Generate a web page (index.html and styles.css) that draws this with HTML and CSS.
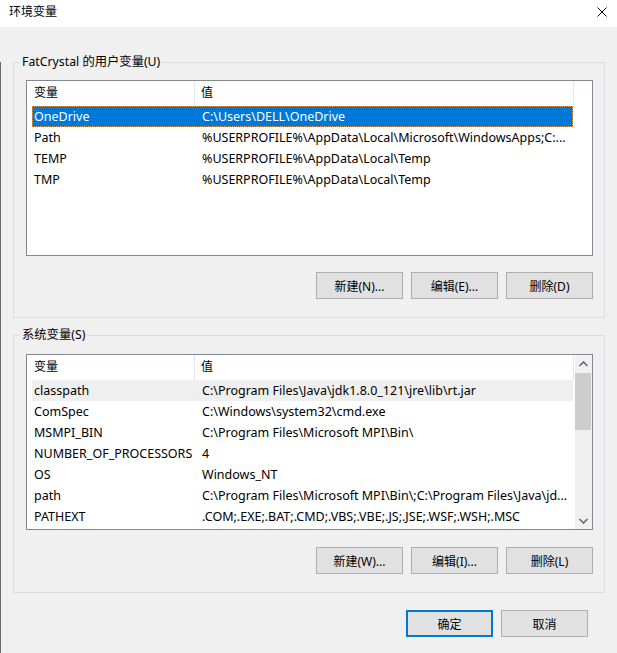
FILE: index.html
```html
<!DOCTYPE html>
<html lang="zh-CN">
<head>
<meta charset="UTF-8">
<title>环境变量</title>
<link rel="stylesheet" href="styles.css">
</head>
<body>
<div class="window">
  <div class="titlebar">
    <span class="title">环境变量</span>
    <svg class="close" width="10" height="10" viewBox="0 0 10 10">
      <path d="M0.5 0.5 L9.5 9.5 M9.5 0.5 L0.5 9.5" stroke="#000" stroke-width="1" fill="none"/>
    </svg>
  </div>

  <div class="client">
    <!-- 用户变量 -->
    <div class="group group-user">
      <span class="group-label">FatCrystal 的用户变量(U)</span>
      <div class="list">
        <div class="list-head">
          <div class="head-name">变量</div>
          <div class="head-value">值</div>
        </div>
        <div class="row selected"><span class="cell-name">OneDrive</span><span class="cell-value">C:\Users\DELL\OneDrive</span></div>
        <div class="row"><span class="cell-name">Path</span><span class="cell-value">%USERPROFILE%\AppData\Local\Microsoft\WindowsApps;C:...</span></div>
        <div class="row"><span class="cell-name">TEMP</span><span class="cell-value">%USERPROFILE%\AppData\Local\Temp</span></div>
        <div class="row"><span class="cell-name">TMP</span><span class="cell-value">%USERPROFILE%\AppData\Local\Temp</span></div>
      </div>
      <div class="buttons">
        <button class="btn">新建(N)...</button>
        <button class="btn">编辑(E)...</button>
        <button class="btn">删除(D)</button>
      </div>
    </div>

    <!-- 系统变量 -->
    <div class="group group-system">
      <span class="group-label">系统变量(S)</span>
      <div class="list list-scroll">
        <div class="list-body">
          <div class="list-head">
            <div class="head-name">变量</div>
            <div class="head-value">值</div>
          </div>
          <div class="row hover"><span class="cell-name">classpath</span><span class="cell-value">C:\Program Files\Java\jdk1.8.0_121\jre\lib\rt.jar</span></div>
          <div class="row"><span class="cell-name">ComSpec</span><span class="cell-value">C:\Windows\system32\cmd.exe</span></div>
          <div class="row"><span class="cell-name">MSMPI_BIN</span><span class="cell-value">C:\Program Files\Microsoft MPI\Bin\</span></div>
          <div class="row"><span class="cell-name">NUMBER_OF_PROCESSORS</span><span class="cell-value">4</span></div>
          <div class="row"><span class="cell-name">OS</span><span class="cell-value">Windows_NT</span></div>
          <div class="row"><span class="cell-name">path</span><span class="cell-value">C:\Program Files\Microsoft MPI\Bin\;C:\Program Files\Java\jd...</span></div>
          <div class="row"><span class="cell-name">PATHEXT</span><span class="cell-value">.COM;.EXE;.BAT;.CMD;.VBS;.VBE;.JS;.JSE;.WSF;.WSH;.MSC</span></div>
        </div>
        <div class="scrollbar">
          <div class="arrow">
            <svg width="9" height="6" viewBox="0 0 9 6"><path d="M0.5 5 L4.5 1 L8.5 5" stroke="#606060" stroke-width="1.5" fill="none"/></svg>
          </div>
          <div class="track"><div class="thumb"></div></div>
          <div class="arrow">
            <svg width="9" height="6" viewBox="0 0 9 6"><path d="M0.5 1 L4.5 5 L8.5 1" stroke="#606060" stroke-width="1.5" fill="none"/></svg>
          </div>
        </div>
      </div>
      <div class="buttons">
        <button class="btn">新建(W)...</button>
        <button class="btn">编辑(I)...</button>
        <button class="btn">删除(L)</button>
      </div>
    </div>

    <div class="footer">
      <button class="btn btn-default">确定</button>
      <button class="btn">取消</button>
    </div>

    <svg class="grip" width="10" height="10" viewBox="0 0 10 10">
      <rect x="8" y="2" width="2" height="2" fill="#bcbcbc"/>
      <rect x="5" y="5" width="2" height="2" fill="#bcbcbc"/>
      <rect x="8" y="5" width="2" height="2" fill="#bcbcbc"/>
      <rect x="2" y="8" width="2" height="2" fill="#bcbcbc"/>
      <rect x="5" y="8" width="2" height="2" fill="#bcbcbc"/>
      <rect x="8" y="8" width="2" height="2" fill="#bcbcbc"/>
    </svg>
  </div>
</div>
</body>
</html>
```

FILE: styles.css
```css
body {
  margin: 0;
  background-color: #f0f0f0;
  font-family: "Noto Sans", "Noto Sans CJK SC", sans-serif;
  font-size: 12px;
  color: #000;
}

.window {
  width: 617px;
  height: 653px;
  overflow: hidden;
}

.titlebar {
  height: 27px;
  background-color: #fff;
  display: flex;
  align-items: center;
  justify-content: space-between;
  padding: 0 10px 0 9px;
}

.title {
  font-size: 12px;
  line-height: 16px;
  margin-top: -4px;
}

.close {
  margin-top: -4px;
}

.client {
  position: relative; /* para la esquina de redimensionar */
  height: 626px;
  border-left: 1px solid #6a6a6a;
  padding: 0 12px;
}

.group {
  position: relative;
  border: 1px solid #dcdcdc;
  padding: 17px 11px 18px 12px;
}

.group-user {
  margin-top: 35px;
}

.group-system {
  margin-top: 17px;
  padding-top: 18px;
}

.group-label {
  position: absolute;
  top: -9px;
  left: 6px;
  padding: 0 2px;
  background-color: #f0f0f0;
  line-height: 16px;
  font-size: 12.3px;
}

.list {
  height: 174px;
  border: 1px solid #828790;
  background-color: #fff;
}

.list-scroll {
  display: flex;
}

.list-body {
  flex: 1;
}

.list-head {
  display: flex;
  height: 25px;
  line-height: 24px;
  width: 547px;
}

.head-name {
  width: 160px;
  padding-left: 7px;
  border-right: 1px solid #e5e5e5;
}

.head-value {
  flex: 1;
  padding-left: 6px;
  border-right: 1px solid #e5e5e5;
}

.row {
  display: flex;
  height: 21px;
  line-height: 21px;
  margin-left: 5px;
  width: 541px;
  white-space: nowrap;
  box-sizing: border-box;
  font-size: 12.5px;
}

.cell-name {
  width: 170px;
  padding-left: 2px;
  box-sizing: border-box;
}

.row.selected {
  background-color: #0078d7;
  color: #fff;
  outline: 1px dotted #e0a060;
  outline-offset: -1px;
}

.row.hover {
  background-color: #efefef;
}

.scrollbar {
  width: 17px;
  background-color: #f0f0f0;
  display: flex;
  flex-direction: column;
}

.arrow {
  height: 17px;
  display: flex;
  align-items: center;
  justify-content: center;
}

.track {
  flex: 1;
  padding-top: 1px;
}

.thumb {
  height: 57px;
  width: 16px;
  background-color: #cdcdcd;
}

.buttons {
  display: flex;
  justify-content: flex-end;
  gap: 8px;
  margin-top: 16px;
}

.group-system .buttons {
  margin-top: 17px;
}

.btn {
  width: 87px;
  height: 27px;
  padding: 0;
  background-color: #e1e1e1;
  border: 1px solid #adadad;
  font-family: "Noto Sans", "Noto Sans CJK SC", sans-serif;
  font-size: 12px;
  color: #000;
}

.btn-default {
  border: 2px solid #0078d7;
}

.footer {
  display: flex;
  justify-content: flex-end;
  gap: 8px;
  margin-top: 17px;
  padding-right: 17px;
}

.grip {
  position: absolute;
  right: 1px;
  bottom: 1px;
}
```
